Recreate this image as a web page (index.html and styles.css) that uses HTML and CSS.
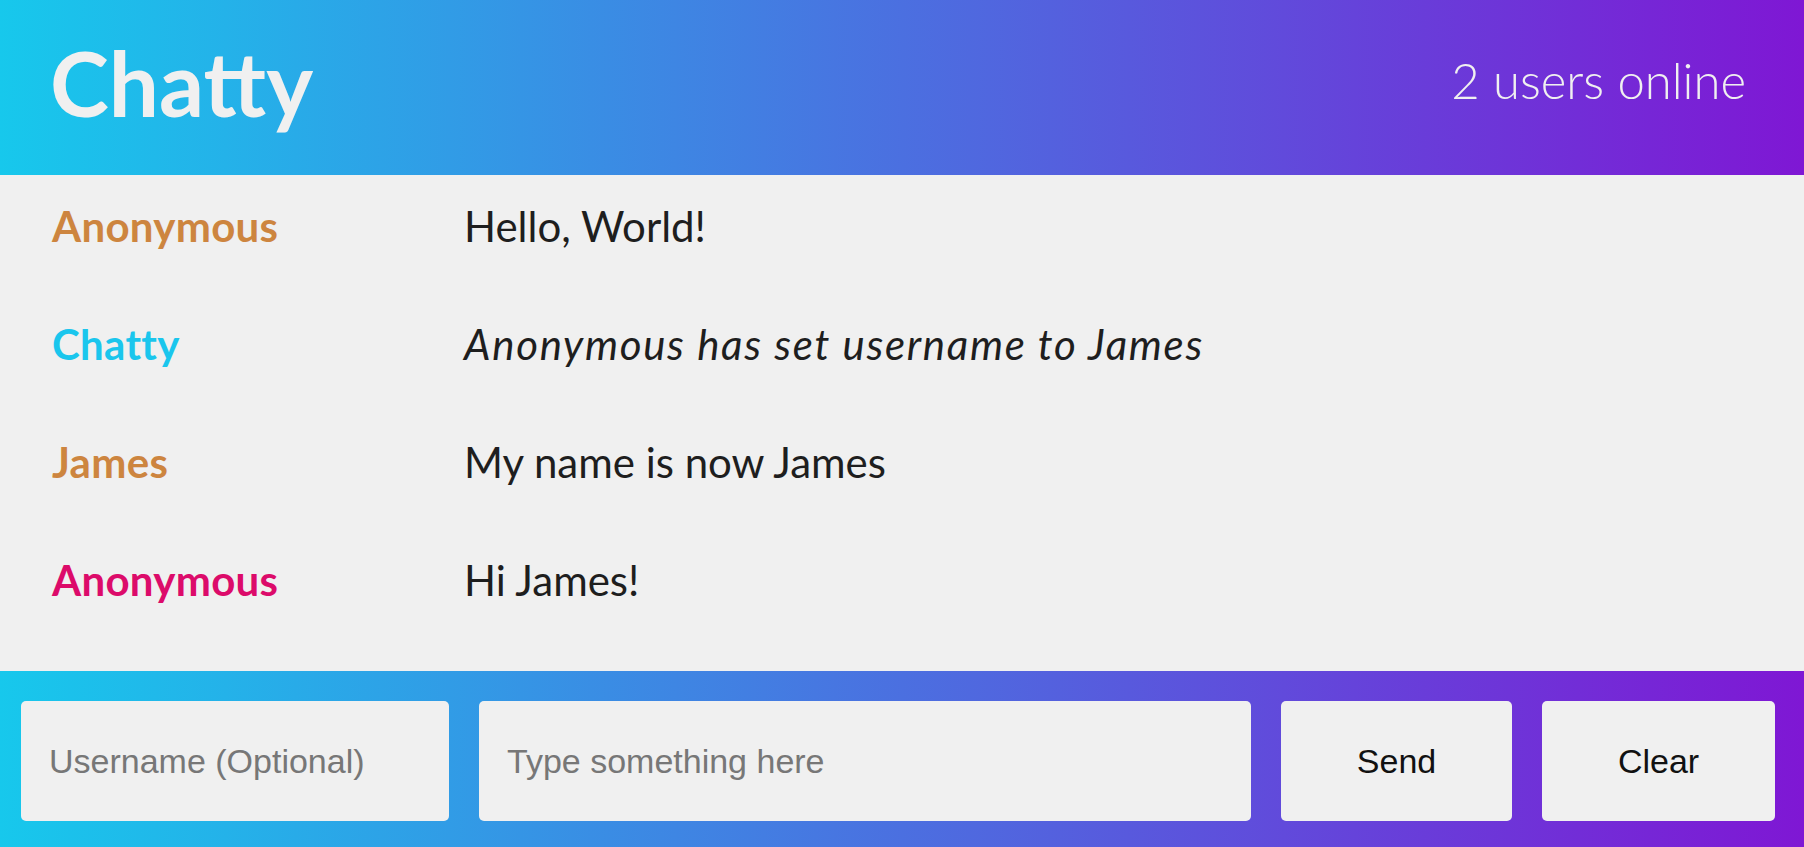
FILE: index.html
```html
<!DOCTYPE html>
<html lang="en">
<head>
<meta charset="utf-8">
<title>Chatty</title>
<link rel="stylesheet" href="styles.css">
</head>
<body>
<div class="app">
  <header class="navbar">
    <h1 class="brand">Chatty</h1>
    <span class="online">2 users online</span>
  </header>
  <main class="messages">
    <div class="message">
      <span class="username orange">Anonymous</span>
      <span class="content">Hello, World!</span>
    </div>
    <div class="message">
      <span class="username cyan">Chatty</span>
      <span class="content system">Anonymous has set username to James</span>
    </div>
    <div class="message">
      <span class="username orange">James</span>
      <span class="content">My name is now James</span>
    </div>
    <div class="message">
      <span class="username pink">Anonymous</span>
      <span class="content">Hi James!</span>
    </div>
  </main>
  <footer class="chatbar">
    <input class="field user" type="text" placeholder="Username (Optional)">
    <input class="field text" type="text" placeholder="Type something here">
    <button class="btn send">Send</button>
    <button class="btn clear">Clear</button>
  </footer>
</div>
</body>
</html>
```

FILE: styles.css
```css
* { box-sizing: border-box; }
html, body { margin: 0; padding: 0; height: 100%; }
body {
  background: #f0f0f0;
  font-family: Lato, "Noto Sans", sans-serif;
  color: #1e1e1e;
}
.app {
  display: flex;
  flex-direction: column;
  height: 847px;
}
.navbar, .chatbar {
  background: linear-gradient(to right, #17c8ec, #7f17d4);
}
.navbar {
  height: 175px;
  display: flex;
  align-items: center;
  justify-content: space-between;
  padding: 0 58px 0 50px;
  flex: none;
}
.brand {
  margin: 0;
  font-size: 89px;
  font-weight: 700;
  color: #f0f0f0;
  line-height: 1;
  padding-bottom: 10px;
}
.online {
  font-size: 49px;
  font-weight: 300;
  color: #f0f0f0;
  padding-bottom: 16px;
}
.messages {
  flex: 1;
  display: flex;
  flex-direction: column;
}
.message {
  display: flex;
  height: 118px;
  align-items: center;
  font-size: 42px;
  padding: 0 0 16px 52px;
}
.username {
  width: 412px;
  font-weight: 700;
  flex: none;
  letter-spacing: 0.3px;
}
.orange { color: #cd853f; }
.cyan { color: #1ac6ed; }
.pink { color: #dc0b6a; }
.system { font-style: italic; letter-spacing: 1.7px; }
.chatbar {
  flex: none;
  height: 176px;
  display: flex;
  padding: 30px 28px 26px 21px;
  gap: 30px;
}
.field, .btn {
  background: #f0f0f0;
  border: none;
  border-radius: 5px;
  height: 120px;
  font-family: "Liberation Sans", Arial, sans-serif;
  font-size: 34px;
  outline: none;
  flex: none;
}
.field {
  padding: 0 28px;
  color: #222;
}
.field::placeholder { color: #777; }
.user { width: 428px; }
.text { width: 772px; }
.btn {
  color: #111;
  padding: 0;
}
.send { width: 231px; }
.clear { width: 233px; }
```
